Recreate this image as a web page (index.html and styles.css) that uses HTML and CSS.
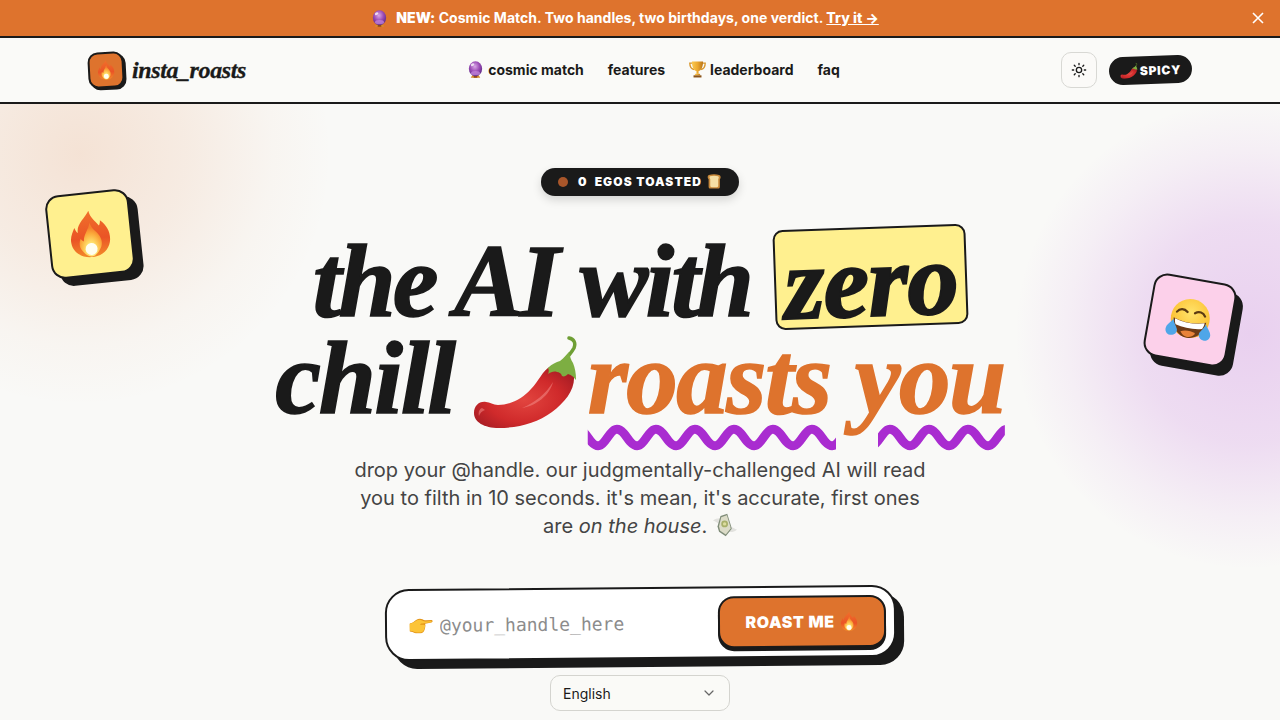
FILE: index.html
```html
<!DOCTYPE html>
<html lang="en">
<head>
    <meta charset="UTF-8">
    <meta name="viewport" content="width=device-width, initial-scale=1.0">
    <title>insta_roasts</title>
    <link rel="stylesheet" href="styles.css">
</head>
<body>

    <!-- Emoji drawings -->
    <svg class="sprite" aria-hidden="true">
        <defs>
            <linearGradient id="fire-outer" x1="0" y1="0" x2="0" y2="1">
                <stop offset="0" stop-color="#f0702a"/>
                <stop offset="0.6" stop-color="#ea5426"/>
                <stop offset="1" stop-color="#f38a2a"/>
            </linearGradient>
            <radialGradient id="fire-core" cx="0.5" cy="0.8" r="0.65">
                <stop offset="0" stop-color="#fff8c8"/>
                <stop offset="0.35" stop-color="#ffdf6a"/>
                <stop offset="0.75" stop-color="#fba83a"/>
                <stop offset="1" stop-color="#f4802c"/>
            </radialGradient>
            <radialGradient id="chili-body" cx="0.5" cy="0.55" r="0.6">
                <stop offset="0" stop-color="#e2453f"/>
                <stop offset="0.6" stop-color="#d02a2b"/>
                <stop offset="1" stop-color="#a81d24"/>
            </radialGradient>
            <radialGradient id="face" cx="0.5" cy="0.35" r="0.7">
                <stop offset="0" stop-color="#ffe36b"/>
                <stop offset="0.7" stop-color="#fcc438"/>
                <stop offset="1" stop-color="#f29a1f"/>
            </radialGradient>
            <radialGradient id="ball" cx="0.45" cy="0.35" r="0.65">
                <stop offset="0" stop-color="#d9a6e6"/>
                <stop offset="0.55" stop-color="#9a4bb5"/>
                <stop offset="1" stop-color="#5d2a86"/>
            </radialGradient>
            <linearGradient id="gold" x1="0" y1="0" x2="1" y2="0">
                <stop offset="0" stop-color="#f9c94f"/>
                <stop offset="0.5" stop-color="#eda92e"/>
                <stop offset="1" stop-color="#b8741a"/>
            </linearGradient>

            <symbol id="e-fire" viewBox="0 0 64 64">
                <path fill="url(#fire-outer)" d="M33 1c1 9 7 14 12 21 1-2 2-4 2-7 8 7 12 16 11 26-1 13-12 22-26 22S7 54 6 42c-1-8 3-14 6-20 1 3 2 6 4 7-1-12 11-18 17-28z"/>
                <path fill="url(#fire-core)" d="M33 17c1 8 7 11 11 18 4 7 3 14-1 19-3 5-7 8-11 8s-9-3-12-8c-4-5-4-12-1-17 1 2 2 3 4 4 0-9 7-14 10-24z"/>
                <ellipse cx="32" cy="52" rx="8" ry="8" fill="#fffef0"/>
            </symbol>

            <symbol id="e-ball" viewBox="0 0 64 64">
                <path fill="#d88b2a" d="M20 54h24l6 9H14z"/>
                <path fill="#8f4a18" d="M26 54h12l1 9H25z"/>
                <ellipse cx="32" cy="29" rx="25" ry="28" fill="url(#ball)"/>
                <ellipse cx="32" cy="46" rx="17" ry="8" fill="#c98ae0" opacity=".7"/>
                <ellipse cx="21" cy="14" rx="7" ry="5" fill="#fff" opacity=".75" transform="rotate(-30 21 14)"/>
            </symbol>

            <symbol id="e-trophy" viewBox="0 0 64 64">
                <path fill="none" stroke="#d9962a" stroke-width="5" d="M14 8H3c0 14 7 22 17 24M50 8h11c0 14-7 22-17 24"/>
                <path fill="url(#gold)" d="M11 2h42c0 19-6 33-17 36v10h-8V38C17 35 11 21 11 2z"/>
                <path fill="url(#gold)" d="M24 48h16l3 6H21z"/>
                <path fill="#8a5318" d="M17 54h30v8H17z"/>
            </symbol>

            <symbol id="e-chili" viewBox="0 0 106 92">
                <path fill="none" stroke="#6f9f35" stroke-width="3.5" stroke-linecap="round" d="M88 30C91 22 97 18 100 12c2-5 0-9-5-10"/>
                <path fill="url(#chili-body)" d="M77 30c9-3 21 0 23 10 1 14-9 26-22 36-15 11-34 16-53 16C10 92 0 86 0 77c0-7 5-12 12-11 4 0 7 3 12 3 13 0 25-7 33-16 8-8 11-18 20-23z"/>
                <path fill="#f28a86" opacity=".55" d="M8 72c-3 1-4 5-3 8 1-3 3-5 6-6zM48 72c12-5 24-14 31-26-3 13-17 24-31 26z"/>
                <path fill="#7dae42" d="M74 32c4-4 8-6 12-7 4-3 6-6 9-9 1 5 2 8 4 11 2 5 3 10 3 17-3-4-5-5-8-6-2 2-4 3-6 2-1-3-3-4-5-4-3-1-6 0-9 2 1-2 1-4 0-6z"/>
            </symbol>

            <symbol id="e-laugh" viewBox="0 0 64 64">
                <circle cx="32" cy="30" r="26" fill="url(#face)"/>
                <path fill="none" stroke="#5b3a12" stroke-width="3" stroke-linecap="round" d="M13 24c3-5 9-6 14-2M37 22c5-4 11-3 14 2"/>
                <path fill="#6d3a16" d="M10 32c14 5 30 5 44 0 0 14-10 24-22 24S10 46 10 32z"/>
                <path fill="#fff" d="M12 33c13 4 27 4 40 0 0 3-1 6-2 8-11 3-25 3-36 0-1-2-2-5-2-8z"/>
                <path fill="#e8823a" d="M22 49c6-3 14-3 20 0-3 4-6 6-10 6s-7-2-10-6z"/>
                <path fill="#4fa6e8" d="M10 34c1 5 5 9 7 13 1 5-3 9-8 9s-8-5-7-9c1-5 6-8 8-13zM54 34c-1 5-5 9-7 13-1 5 3 9 8 9s8-5 7-9c-1-5-6-8-8-13z"/>
            </symbol>

            <symbol id="e-toast" viewBox="0 0 64 64">
                <path fill="#c98a3c" d="M10 4c12-4 32-4 44 0 8 3 8 14 3 18v32c0 5-3 8-8 8H17c-5 0-8-3-8-8V22C4 18 3 7 10 4z"/>
                <path fill="#f5dfa6" d="M15 10c10-3 24-3 34 0 5 2 4 9 1 11v28c0 5-2 7-6 7H22c-4 0-6-2-6-7V21c-3-2-5-9-1-11z"/>
            </symbol>

            <symbol id="e-hand" viewBox="0 0 64 48">
                <path fill="#e39417" d="M2 20c7-1 12-5 17-9 6-4 11-5 17-2 3 2 5 3 9 3l15-1c4 0 4 6 0 7l-17 3c1 4 1 7 0 10-1 3-1 6-3 9-2 4-6 6-12 6-8 1-14 0-19-3-2-1-5-2-7-2z"/>
                <path fill="#fcc437" d="M2 21c7-1 12-5 17-8 6-4 11-4 16-1 3 2 6 3 10 3l14-1c2 0 2 2 0 3l-23 3c-3 0-6 1-7 3 5 1 9 0 13 1 1 3 1 6-1 9-1 3-1 5-3 7-3 3-6 4-10 4-7 1-13 0-18-3-2-1-5-2-8-2z"/>
            </symbol>

            <symbol id="e-money" viewBox="0 0 64 64">
                <path fill="#e2e2de" d="M0 20c8-6 17-7 25-5l-7 16C13 26 6 22 0 20zM64 44c-7 7-16 8-25 6l7-15c6 3 12 7 18 9z"/>
                <path fill="#7f8c78" d="M20 8 38 2l10 32 2 8-16 20-18-12-4-14z"/>
                <path fill="#dcdcc8" d="M22 11 37 6l9 29 1 6-13 16-15-10-3-12z"/>
                <circle cx="31" cy="29" r="9" fill="#a8b06a"/>
                <circle cx="31" cy="29" r="4.5" fill="#dcdc9e"/>
            </symbol>
        </defs>
    </svg>

    <!-- Banner -->
    <div class="banner">
        <svg class="emoji emoji-banner"><use href="#e-ball"/></svg>
        <p class="banner-text"><strong>NEW:</strong> Cosmic Match. Two handles, two birthdays, one verdict. <a href="#" class="banner-link">Try it →</a></p>
        <button class="banner-close" aria-label="Close">
            <svg viewBox="0 0 12 12" width="12" height="12"><path d="M1 1l10 10M11 1L1 11" stroke="#fff" stroke-width="1.6" fill="none"/></svg>
        </button>
    </div>

    <!-- Nav -->
    <nav class="nav">
        <a href="#" class="logo">
            <span class="logo-box"><svg class="emoji emoji-logo"><use href="#e-fire"/></svg></span>
            <span class="logo-text">insta_roasts</span>
        </a>
        <div class="nav-links">
            <a href="#" class="nav-link"><svg class="emoji emoji-nav"><use href="#e-ball"/></svg>cosmic match</a>
            <a href="#" class="nav-link">features</a>
            <a href="#" class="nav-link"><svg class="emoji emoji-nav"><use href="#e-trophy"/></svg>leaderboard</a>
            <a href="#" class="nav-link">faq</a>
        </div>
        <div class="nav-right">
            <button class="theme-button" aria-label="Theme">
                <svg viewBox="0 0 24 24" width="16" height="16" fill="none" stroke="#1a1a1a" stroke-width="2" stroke-linecap="round"><circle cx="12" cy="12" r="4"/><path d="M12 2v2M12 20v2M4.9 4.9l1.4 1.4M17.7 17.7l1.4 1.4M2 12h2M20 12h2M4.9 19.1l1.4-1.4M17.7 6.3l1.4-1.4"/></svg>
            </button>
            <div class="spicy-pill"><svg class="emoji emoji-spicy"><use href="#e-chili"/></svg>SPICY</div>
        </div>
    </nav>

    <!-- Hero -->
    <main class="hero">
        <div class="blob blob-orange"></div>
        <div class="blob blob-purple"></div>

        <div class="sticker sticker-fire"><svg class="emoji emoji-sticker"><use href="#e-fire"/></svg></div>
        <div class="sticker sticker-laugh"><svg class="emoji emoji-sticker"><use href="#e-laugh"/></svg></div>

        <div class="counter">
            <span class="counter-dot"></span>
            <span class="counter-num">0</span>
            <span>EGOS TOASTED</span>
            <svg class="emoji emoji-toast"><use href="#e-toast"/></svg>
        </div>

        <h1 class="headline">
            <span class="headline-line">the AI with <span class="zero">zero</span></span>
            <span class="headline-line"><span class="chill">chill</span> <svg class="emoji-chili"><use href="#e-chili"/></svg><span class="roasts">roasts you</span></span>
        </h1>

        <p class="lead">drop your @handle. our judgmentally-challenged AI will read you to filth in 10 seconds. it's mean, it's accurate, first ones are <em>on the house</em>. <svg class="emoji emoji-money"><use href="#e-money"/></svg></p>

        <form class="roast-form">
            <svg class="emoji emoji-hand"><use href="#e-hand"/></svg>
            <input class="roast-input" type="text" placeholder="@your_handle_here">
            <button type="button" class="roast-button">ROAST ME <svg class="emoji emoji-button"><use href="#e-fire"/></svg></button>
        </form>

        <div class="lang-select">
            <span>English</span>
            <svg viewBox="0 0 12 12" width="12" height="12" fill="none" stroke="#666" stroke-width="1.2" stroke-linecap="round" stroke-linejoin="round"><path d="M2 4l4 4 4-4"/></svg>
        </div>
    </main>

</body>
</html>
```

FILE: styles.css
```css
/* General */
* {
    box-sizing: border-box;
}

body {
    margin: 0;
    height: 100vh;
    overflow: hidden;
    font-family: 'Inter', 'Liberation Sans', sans-serif;
    background-color: #f9f9f7;
    color: #1a1a1a;
    display: flex;
    flex-direction: column;
}

a {
    color: inherit;
    text-decoration: none;
}

.sprite {
    position: absolute;
    width: 0;
    height: 0;
}

.emoji {
    display: inline-block;
    flex-shrink: 0;
}

/* Banner */
.banner {
    height: 38px;
    flex-shrink: 0;
    padding-right: 30px;
    background-color: #de732d;
    border-bottom: 2px solid #1a1a1a;
    color: #fff;
    display: flex;
    align-items: center;
    justify-content: center;
    gap: 8px;
    position: relative;
}

.banner-text {
    margin: 0 0 1px;
    font-size: 14px;
    font-weight: 700;
    letter-spacing: 0.03px;
}

.banner-text strong {
    font-weight: 900;
}

.banner-link {
    text-decoration: underline;
    font-weight: 800;
}

.banner-close {
    position: absolute;
    right: 16px;
    top: 12px;
    padding: 0;
    width: 12px;
    height: 12px;
    display: flex;
    border: none;
    background: none;
}

.emoji-banner {
    width: 17px;
    height: 19px;
}

/* Nav */
.nav {
    height: 66px;
    flex-shrink: 0;
    padding: 0 88px;
    background-color: #fafaf8;
    border-bottom: 2px solid #1a1a1a;
    display: flex;
    align-items: center;
    justify-content: space-between;
    position: relative;
    z-index: 2;
}

.logo {
    display: flex;
    align-items: center;
    gap: 8px;
}

.logo-box {
    width: 36px;
    height: 36px;
    background-color: #de732d;
    border: 2px solid #1a1a1a;
    border-radius: 10px;
    box-shadow: 2px 2px 0 #1a1a1a;
    transform: rotate(-3deg);
    display: flex;
    align-items: center;
    justify-content: center;
}

.emoji-logo {
    width: 20px;
    height: 20px;
}

.logo-text {
    font-family: 'Liberation Serif', serif;
    font-style: italic;
    font-weight: 700;
    font-size: 24px;
    letter-spacing: -0.4px;
    -webkit-text-stroke: 0.3px #1a1a1a;
}

.nav-links {
    display: flex;
    align-items: center;
    gap: 24px;
    padding-bottom: 2px;
}

.nav-link {
    display: flex;
    align-items: center;
    gap: 4px;
    font-size: 14px;
    font-weight: 700;
}

.emoji-nav {
    width: 17px;
    height: 19px;
}

.nav-right {
    display: flex;
    align-items: center;
    gap: 12px;
}

.theme-button {
    width: 36px;
    height: 36px;
    padding: 0;
    background-color: #fbfaf8;
    border: 1px solid #d8d8d4;
    border-radius: 10px;
    display: flex;
    align-items: center;
    justify-content: center;
}

.spicy-pill {
    width: 83px;
    height: 28px;
    background-color: #1a1a1a;
    color: #fff;
    border-radius: 14px;
    font-size: 12px;
    font-weight: 900;
    letter-spacing: 0.7px;
    display: flex;
    align-items: center;
    justify-content: center;
    gap: 2px;
    transform: rotate(-2deg);
}

.emoji-spicy {
    width: 18px;
    height: 16px;
}

/* Hero */
.hero {
    flex: 1;
    position: relative;
    overflow: hidden;
    display: flex;
    flex-direction: column;
    align-items: center;
    padding-top: 64px;
}

.blob {
    position: absolute;
    border-radius: 50%;
}

.blob-orange {
    left: -190px;
    top: -220px;
    width: 540px;
    height: 540px;
    background: radial-gradient(circle, rgba(222, 115, 45, 0.17) 0%, rgba(222, 115, 45, 0.1) 28%, rgba(222, 115, 45, 0.03) 50%, rgba(222, 115, 45, 0) 66%);
}

.blob-purple {
    left: 990px;
    top: -30px;
    width: 520px;
    height: 520px;
    background: radial-gradient(circle, rgba(169, 44, 208, 0.2) 0%, rgba(169, 44, 208, 0.14) 30%, rgba(169, 44, 208, 0.05) 50%, rgba(169, 44, 208, 0) 64%);
}

/* Floating stickers */
.sticker {
    position: absolute;
    width: 84px;
    height: 84px;
    border: 2px solid #1a1a1a;
    border-radius: 14px;
    box-shadow: 8px 8px 0 #1a1a1a;
    display: flex;
    align-items: center;
    justify-content: center;
}

.sticker-fire {
    left: 48px;
    top: 88px;
    background-color: #fff08f;
    transform: rotate(-6deg);
}

.sticker-laugh {
    left: 1148px;
    top: 174px;
    background-color: #fcd0ea;
    transform: rotate(10deg);
}

.emoji-sticker {
    width: 48px;
    height: 48px;
}

/* Counter */
.counter {
    position: relative;
    height: 28px;
    padding: 0 17px 1px;
    background-color: #1a1a1a;
    color: #fff;
    border-radius: 14px;
    font-size: 12px;
    font-weight: 900;
    letter-spacing: 1.1px;
    display: flex;
    align-items: center;
    gap: 7px;
    flex-shrink: 0;
    box-shadow: 0 4px 10px rgba(0, 0, 0, 0.15);
}

.counter-dot {
    width: 10px;
    height: 10px;
    background-color: #a9562a;
    border-radius: 50%;
    margin-right: 3px;
}

.emoji-toast {
    width: 16px;
    height: 15px;
    margin-left: -3px;
}

/* Headline */
.headline {
    position: relative;
    margin: 31px 0 0;
    font-family: 'Liberation Serif', serif;
    font-style: italic;
    font-weight: 700;
    font-size: 103px;
    line-height: 97px;
    text-align: center;
    letter-spacing: -3px;
    -webkit-text-stroke: 1.6px #1a1a1a;
    color: #1a1a1a;
    flex-shrink: 0;
}

.headline-line {
    display: block;
    white-space: nowrap;
}

.zero {
    display: inline-block;
    background-color: #fff08f;
    border: 2px solid #1a1a1a;
    border-radius: 10px;
    padding: 8px 8px 0;
    line-height: 88px;
    letter-spacing: -1px;
    transform: rotate(-2deg);
    -webkit-text-stroke: 2px #1a1a1a;
}

.chill {
    letter-spacing: -2px;
}

.emoji-chili {
    width: 106px;
    height: 92px;
    margin: 0 8px 0 -3px;
    vertical-align: -15px;
}

.roasts {
    color: #de732d;
    letter-spacing: -1.5px;
    -webkit-text-stroke: 1.6px #de732d;
    text-decoration: underline wavy #a92cd0 9px;
    text-underline-offset: 14px;
}

/* Lead */
.lead {
    position: relative;
    width: 580px;
    margin: 28px 0 0;
    font-size: 20px;
    line-height: 28px;
    text-align: center;
    color: #444;
    flex-shrink: 0;
}

.emoji-money {
    width: 24px;
    height: 24px;
    vertical-align: -4px;
}

/* Form */
.roast-form {
    position: relative;
    width: 511px;
    height: 72px;
    margin-top: 47px;
    padding: 0 8px 0 22px;
    background-color: #fff;
    border: 2px solid #1a1a1a;
    border-radius: 24px;
    box-shadow: 8px 8px 0 #1a1a1a;
    transform: rotate(-0.5deg);
    display: flex;
    align-items: center;
    gap: 7px;
    flex-shrink: 0;
}

.emoji-hand {
    width: 24px;
    height: 18px;
}

.roast-input {
    flex: 1;
    min-width: 0;
    border: none;
    outline: none;
    background: none;
    font-family: 'DejaVu Sans Mono', 'Liberation Mono', monospace;
    font-size: 18px;
    padding: 0;
    color: #1a1a1a;
}

.roast-input::placeholder {
    color: #8c8c8c;
}

.roast-button {
    width: 168px;
    height: 52px;
    background-color: #de732d;
    border: 2px solid #1a1a1a;
    border-radius: 16px;
    box-shadow: 0 3px 0 #1a1a1a;
    color: #fff;
    font-family: 'Inter', 'Liberation Sans', sans-serif;
    font-size: 16px;
    font-weight: 900;
    letter-spacing: 0.6px;
    display: flex;
    align-items: center;
    justify-content: center;
    gap: 4px;
}

.emoji-button {
    width: 20px;
    height: 20px;
}

/* Language select */
.lang-select {
    position: relative;
    width: 180px;
    height: 36px;
    margin-top: 16px;
    padding: 0 14px 0 12px;
    background-color: #fafaf7;
    border: 1px solid #d4d4cf;
    border-radius: 10px;
    font-size: 14px;
    font-weight: 400;
    display: flex;
    flex-shrink: 0;
    align-items: center;
    justify-content: space-between;
}
```
